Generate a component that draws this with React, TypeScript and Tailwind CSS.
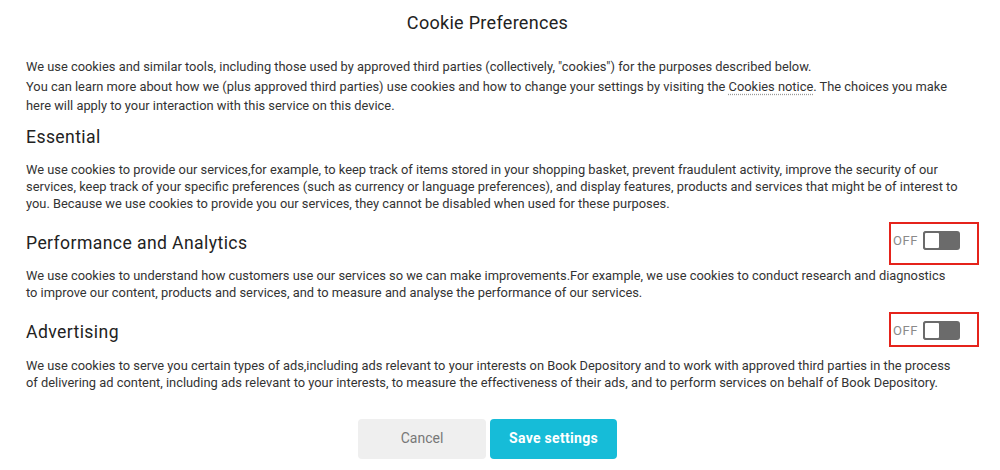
import React from "react";

function Toggle({ h }: { h: string }) {
  return (
    <div className={`-mr-[20px] flex w-[90px] items-start border-2 border-[#e5231b] pl-[2px] pt-[7px] ${h}`}>
      <span className="mt-[1px] text-[13px] leading-[17px] tracking-[0.6px] text-[#8a8a8a]">OFF</span>
      <div className="ml-[5px] flex h-[19px] w-[37px] overflow-hidden rounded-[3px] bg-[#6b6b6b]">
        <div className="h-[19px] w-[18px] rounded-[3px] border-2 border-[#6b6b6b] bg-white" />
      </div>
    </div>
  );
}

export default function App() {
  return (
    <div className="h-[470px] w-[1000px] bg-white text-[#333]" style={{ fontFamily: "Roboto, 'Noto Sans', sans-serif" }}>
      <div className="w-[975px] pl-[26px] pr-[16px]">
        <h1 className="pr-[10px] pt-[11px] text-center text-[18px] leading-[24px] tracking-[0.3px] text-[#222]">Cookie Preferences</h1>
        <p className="mt-[22px] text-[12.87px] leading-[19.5px]">
          We use cookies and similar tools, including those used by approved third parties (collectively, "cookies") for the purposes described below.
          <br />
          You can learn more about how we (plus approved third parties) use cookies and how to change your settings by visiting the{" "}
          <a className="underline decoration-[#999] decoration-dotted underline-offset-[3px]">Cookies notice</a>. The choices you make here will apply to your interaction with this service on this device.
        </p>
        <h2 className="mt-[9px] text-[17.6px] leading-[24px] tracking-[0.4px] text-[#222]">Essential</h2>
        <p className="mt-[12.5px] text-[12.87px] leading-[17px]">
          We use cookies to provide our services,for example, to keep track of items stored in your shopping basket, prevent fraudulent activity, improve the security of our services, keep track of your specific preferences (such as currency or language preferences), and display features, products and services that might be of interest to you. Because we use cookies to provide you our services, they cannot be disabled when used for these purposes.
        </p>
        <div className="mt-[9.5px] flex items-start justify-between">
          <h2 className="mt-[9px] text-[17.6px] leading-[24px] tracking-[0.4px] text-[#222]">Performance and Analytics</h2>
          <Toggle h="h-[43px]" />
        </div>
        <p className="mt-[2.5px] text-[12.87px] leading-[17px]">
          We use cookies to understand how customers use our services so we can make improvements.For example, we use cookies to conduct research and diagnostics to improve our content, products and services, and to measure and analyse the performance of our services.
        </p>
        <div className="mt-[10.5px] flex items-start justify-between">
          <h2 className="mt-[8px] text-[17.6px] leading-[24px] tracking-[0.4px] text-[#222]">Advertising</h2>
          <Toggle h="h-[35px]" />
        </div>
        <p className="mt-[10.5px] text-[12.87px] leading-[17px]">
          We use cookies to serve you certain types of ads,including ads relevant to your interests on Book Depository and to work with approved third parties in the process of delivering ad content, including ads relevant to your interests, to measure the effectiveness of their ads, and to perform services on behalf of Book Depository.
        </p>
      </div>
      <div className="mt-[27.5px] flex w-[975px] justify-center gap-[4px]">
        <button className="h-[40px] w-[128px] rounded-[4px] bg-[#efefef] text-[14px] text-[#777]">Cancel</button>
        <button className="h-[40px] w-[127px] rounded-[4px] bg-[#16bcd8] text-[14px] font-bold tracking-[0.3px] text-white">Save settings</button>
      </div>
    </div>
  );
}
